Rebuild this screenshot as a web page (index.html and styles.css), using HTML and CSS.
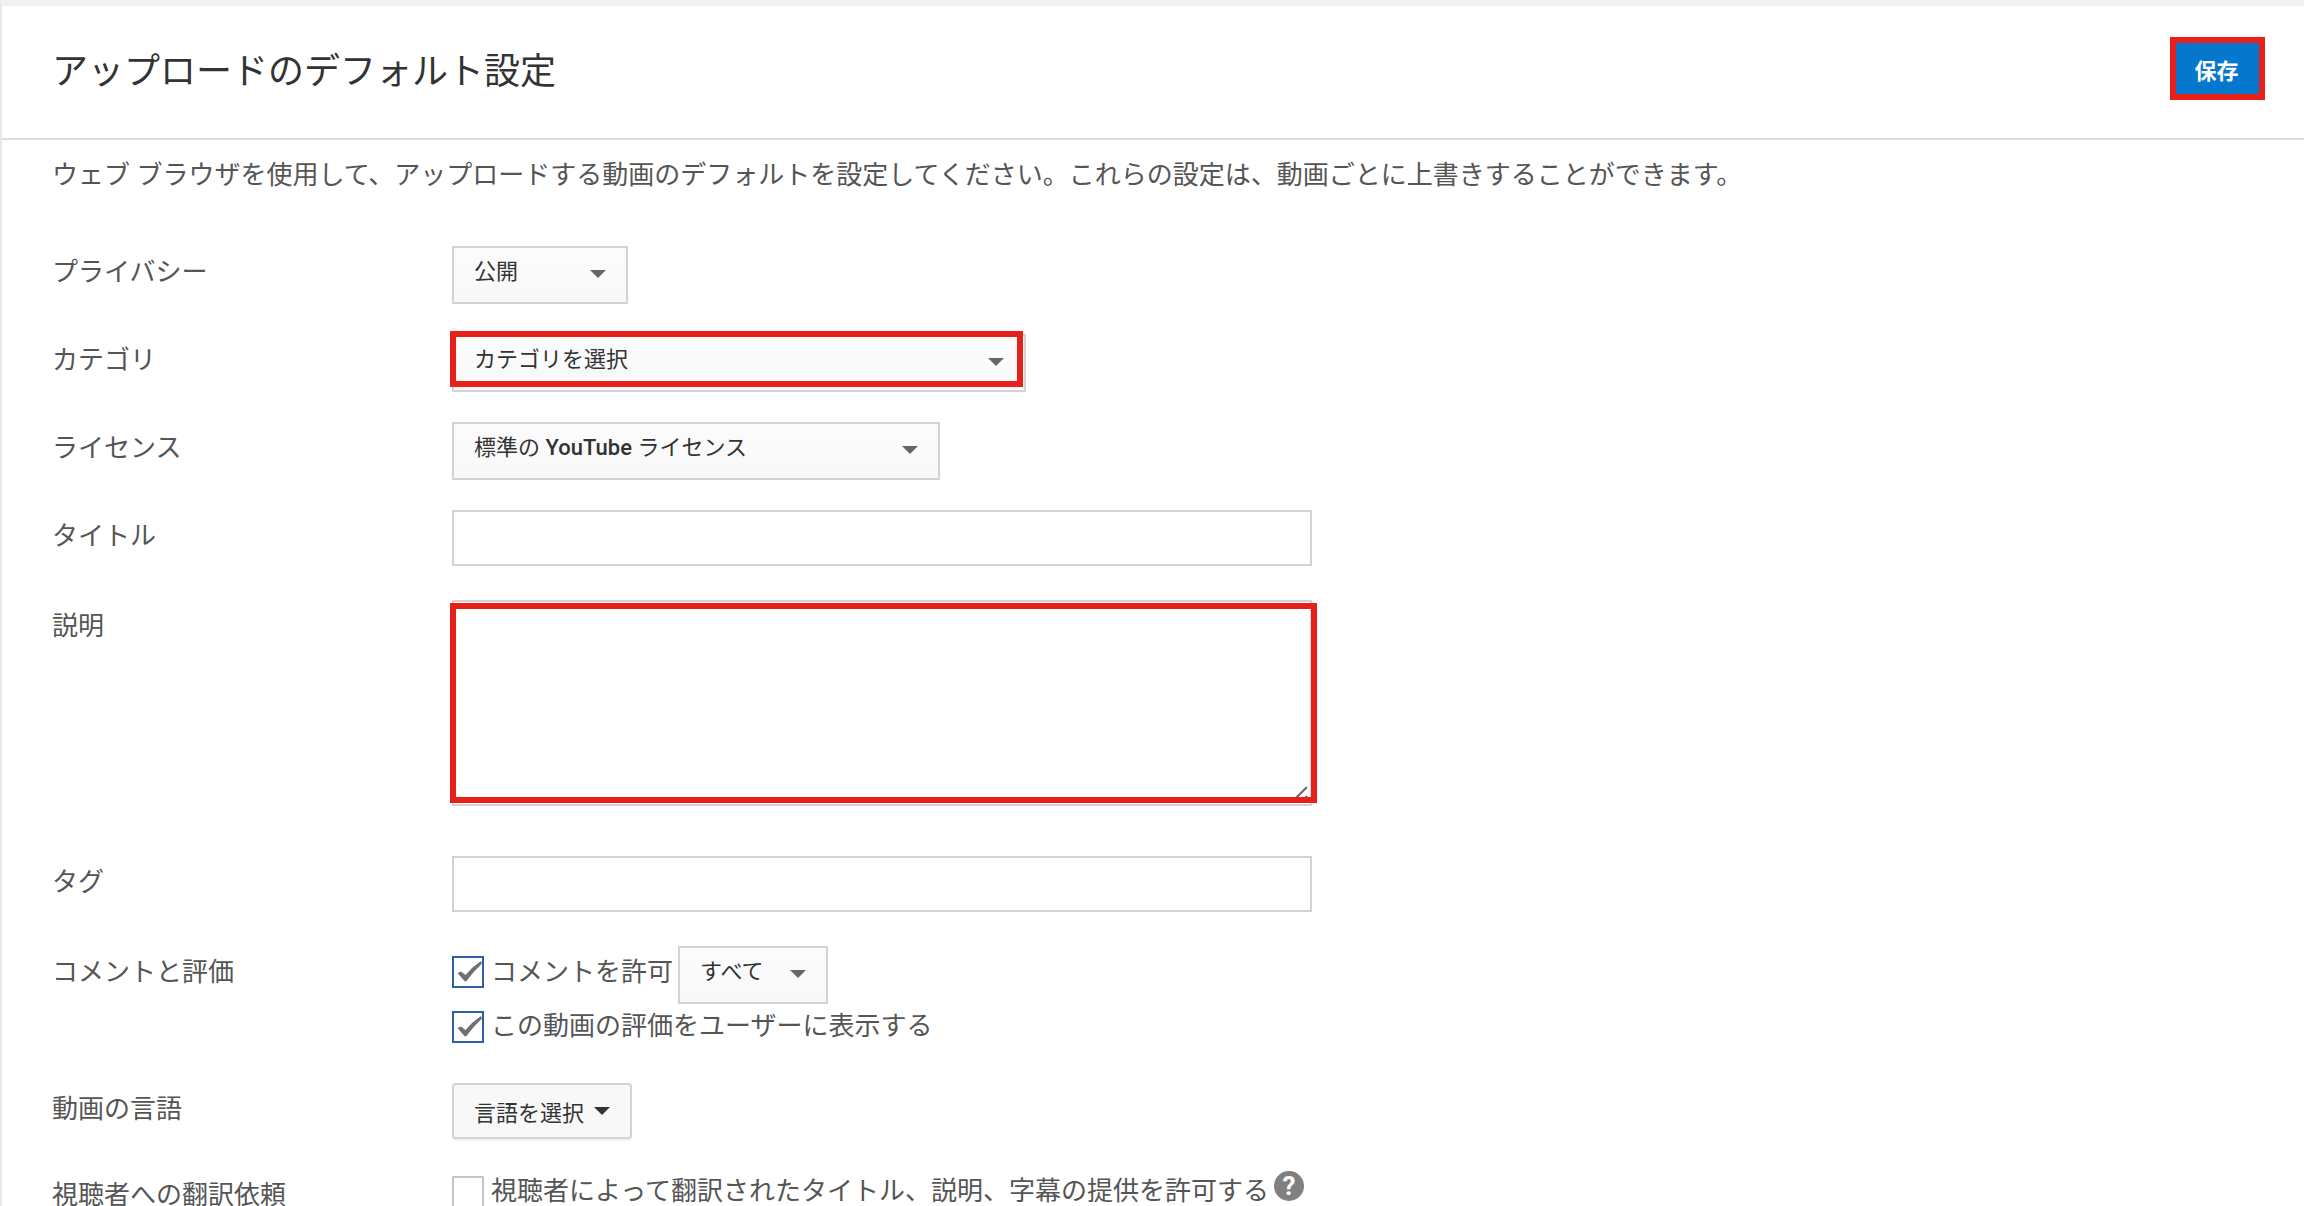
FILE: index.html
```html
<!DOCTYPE html>
<html lang="ja">
<head>
<meta charset="utf-8">
<meta name="viewport" content="width=device-width, initial-scale=1">
<title>アップロードのデフォルト設定</title>
<link rel="stylesheet" href="styles.css">
</head>
<body>
<form class="panel">
  <header class="panel-header">
    <h1 class="panel-title">アップロードのデフォルト設定</h1>
    <button type="submit" class="save">保存</button>
  </header>
  <main class="panel-body">
    <p class="intro">ウェブ ブラウザを使用して、アップロードする動画のデフォルトを設定してください。これらの設定は、動画ごとに上書きすることができます。</p>

    <div class="row">
      <label class="row-label" for="privacy">プライバシー</label>
      <div class="select select-privacy">
        <select id="privacy"><option>公開</option></select>
      </div>
    </div>

    <div class="row">
      <label class="row-label" for="category">カテゴリ</label>
      <div class="select select-category">
        <select id="category"><option>カテゴリを選択</option></select>
        <span class="mark mark-category"></span>
      </div>
    </div>

    <div class="row">
      <label class="row-label" for="license">ライセンス</label>
      <div class="select select-license">
        <select id="license"><option>標準の YouTube ライセンス</option></select>
      </div>
    </div>

    <div class="row row-text">
      <label class="row-label" for="title">タイトル</label>
      <input class="text" id="title" type="text">
    </div>

    <div class="row row-area">
      <label class="row-label" for="description">説明</label>
      <div class="area-wrap">
        <textarea class="area" id="description"></textarea>
        <span class="mark mark-area"></span>
      </div>
    </div>

    <div class="row row-text">
      <label class="row-label" for="tags">タグ</label>
      <input class="text" id="tags" type="text">
    </div>

    <div class="row row-group" role="group" aria-labelledby="comments-label">
      <span class="row-label" id="comments-label">コメントと評価</span>
      <div class="stack">
        <div class="inline">
          <label class="check check-tall"><input type="checkbox" checked>コメントを許可</label>
          <div class="select select-scope">
            <select aria-label="コメントの範囲"><option>すべて</option></select>
          </div>
        </div>
        <label class="check"><input type="checkbox" checked>この動画の評価をユーザーに表示する</label>
      </div>
    </div>

    <div class="row row-language">
      <span class="row-label" id="language-label">動画の言語</span>
      <button type="button" class="menu-button" aria-describedby="language-label">言語を選択<span class="caret"></span></button>
    </div>

    <div class="row row-last">
      <span class="row-label row-label-short">視聴者への翻訳依頼</span>
      <div class="inline">
        <label class="check"><input type="checkbox">視聴者によって翻訳されたタイトル、説明、字幕の提供を許可する</label>
        <button type="button" class="help">?</button>
      </div>
    </div>
  </main>
</form>
</body>
</html>
```
FILE: styles.css
```css
* {
  box-sizing: border-box;
}

body {
  margin: 0;
  background: #fff;
  color: #555;
  font-family: Roboto, "Noto Sans CJK JP", sans-serif;
  font-size: 26px;
}

button,
input,
select,
textarea {
  margin: 0;
  font-family: inherit;
}

.panel {
  border-top: 6px solid #f1f1f1;
  border-left: 2px solid #e8e8e8;
}

.panel-header {
  display: flex;
  align-items: center;
  justify-content: space-between;
  height: 134px;
  padding: 0 39px 7px 50px;
  border-bottom: 2px solid #ddd;
}

.panel-title {
  margin: 0;
  padding-top: 6px;
  color: #333;
  font-size: 36px;
  font-weight: 400;
  line-height: 52px;
}

.save {
  width: 95px;
  height: 63px;
  padding: 0 2px 0 0;
  border: 6px solid #e8201a;
  background: #0577cc;
  color: #fff;
  font-size: 22px;
  font-weight: 700;
}

.panel-body {
  padding: 9px 50px 0;
}

.intro {
  margin: 0 0 45px;
  line-height: 52px;
}

.row {
  display: grid;
  grid-template-columns: 400px 1fr;
  align-items: start;
  margin-bottom: 30px;
}

.row-text {
  margin-bottom: 34px;
}

.row-area {
  margin-bottom: 50px;
}

.row-group {
  margin-bottom: 40px;
}

.row-language {
  margin-bottom: 36px;
}

.row-last {
  margin-bottom: 0;
}

.row-label {
  line-height: 53px;
}

.row-label-short {
  line-height: 40px;
}

.select {
  position: relative;
}

.select select {
  display: block;
  width: 100%;
  height: 58px;
  padding: 0 50px 8px 20px;
  border: 2px solid #d3d3d3;
  border-radius: 0;
  appearance: none;
  background: linear-gradient(#fcfcfc, #f8f8f8);
  color: #333;
  font-family: "Roboto Medium", Roboto, "Noto Sans CJK JP", sans-serif;
  font-size: 22px;
  font-weight: 400;
}

.select::after {
  content: "";
  position: absolute;
  top: 24px;
  right: 22px;
  border: 8px solid transparent;
  border-top-color: #666;
  border-bottom: 0;
  pointer-events: none;
}

.select-privacy {
  width: 176px;
}

.select-category {
  width: 574px;
}

.select-license {
  width: 488px;
}

.select-scope {
  width: 150px;
}

.mark {
  position: absolute;
  border: 6px solid #e8201a;
  pointer-events: none;
}

.mark-category {
  inset: -3px 3px 5px -2px;
}

.mark-area {
  inset: 3px -5px 3px -2px;
}

.text,
.area {
  display: block;
  width: 100%;
  border: 2px solid #d3d3d3;
  border-radius: 0;
  background: #fff;
  color: #333;
  font-size: 22px;
}

.text {
  max-width: 860px;
  height: 56px;
  padding: 0 20px;
}

.area-wrap {
  position: relative;
  max-width: 860px;
}

.area {
  height: 206px;
  padding: 12px 20px;
  resize: none;
  background: #fff url("data:image/svg+xml,%3Csvg xmlns='http://www.w3.org/2000/svg' viewBox='0 0 20 20'%3E%3Cpath d='M2 18L17 3M11 18L17 12' stroke='%23666' stroke-width='2'/%3E%3C/svg%3E") right bottom / 20px 20px no-repeat;
}

.stack {
  display: flex;
  flex-direction: column;
  align-items: flex-start;
  gap: 6px;
}

.inline {
  display: flex;
  align-items: flex-start;
  gap: 5px;
}

.check {
  display: flex;
  align-items: center;
  gap: 7px;
  line-height: 33px;
}

.check-tall {
  min-height: 52px;
}

.check input {
  flex: none;
  width: 32px;
  height: 32px;
  border: 2px solid #c6c6c6;
  appearance: none;
  background: #fff;
}

.check input:checked {
  border-color: #2f5fa5;
  background: #fff url("data:image/svg+xml,%3Csvg xmlns='http://www.w3.org/2000/svg' viewBox='0 0 28 28'%3E%3Cpath d='M3.500 15L7 13.500L11.500 17Q18 9 27 3L28 5.500Q20 13 12.500 23Q11 24 10 22.500Z' fill='%23707070'/%3E%3C/svg%3E") center / 28px 28px no-repeat;
}

.menu-button {
  display: flex;
  align-items: center;
  justify-content: space-between;
  width: 180px;
  height: 56px;
  padding: 0 20px;
  border: 2px solid #d3d3d3;
  border-radius: 4px;
  background: #f8f8f8;
  box-shadow: 0 2px 0 #f2f2f2;
  color: #333;
  font-size: 22px;
}

.caret {
  border: 8px solid transparent;
  border-top-color: #333;
  border-bottom: 0;
}

.help {
  width: 30px;
  height: 30px;
  margin-top: -4px;
  padding: 0;
  border: 0;
  border-radius: 50%;
  background: #808080;
  color: #fff;
  font-size: 26px;
  font-weight: 700;
  line-height: 30px;
}
```
